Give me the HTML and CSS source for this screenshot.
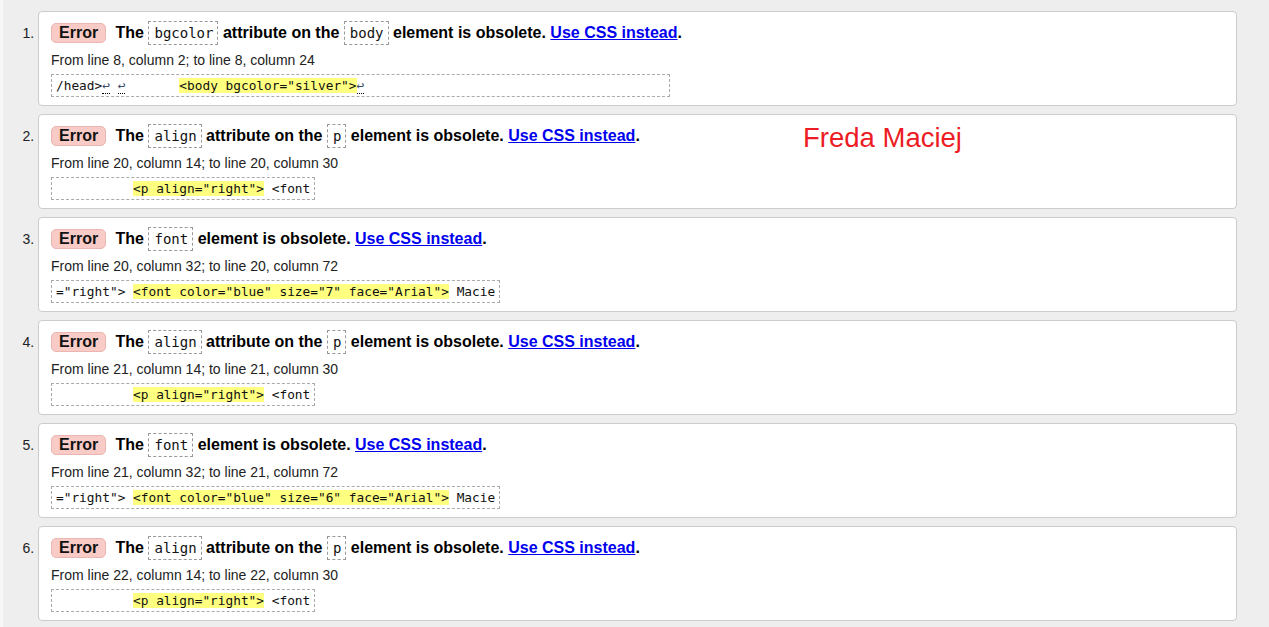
FILE: index.html
```html
<!DOCTYPE html>
<html lang="en">
<head>
<meta charset="utf-8">
<title>Validation results</title>
<link rel="stylesheet" href="styles.css">
</head>
<body>
<ol class="messages">
  <li class="msg">
    <p class="head"><strong class="badge">Error</strong> The <code class="tok">bgcolor</code> attribute on the <code class="tok">body</code> element is obsolete. <a class="link" href="#">Use CSS instead</a>.</p>
    <p class="loc">From line 8, column 2; to line 8, column 24</p>
    <p class="extract"><code>/head&gt;<span class="lf">↩</span> <span class="lf">↩</span>       <b class="hl">&lt;body bgcolor="silver"&gt;</b><span class="lf">↩</span>                                       </code></p>
  </li>
  <li class="msg">
    <p class="head"><strong class="badge">Error</strong> The <code class="tok">align</code> attribute on the <code class="tok">p</code> element is obsolete. <a class="link" href="#">Use CSS instead</a>.</p>
    <p class="loc">From line 20, column 14; to line 20, column 30</p>
    <p class="extract"><code>          <b class="hl">&lt;p align="right"&gt;</b> &lt;font</code></p>
  </li>
  <li class="msg">
    <p class="head"><strong class="badge">Error</strong> The <code class="tok">font</code> element is obsolete. <a class="link" href="#">Use CSS instead</a>.</p>
    <p class="loc">From line 20, column 32; to line 20, column 72</p>
    <p class="extract"><code>="right"&gt; <b class="hl">&lt;font color="blue" size="7" face="Arial"&gt;</b> Macie</code></p>
  </li>
  <li class="msg">
    <p class="head"><strong class="badge">Error</strong> The <code class="tok">align</code> attribute on the <code class="tok">p</code> element is obsolete. <a class="link" href="#">Use CSS instead</a>.</p>
    <p class="loc">From line 21, column 14; to line 21, column 30</p>
    <p class="extract"><code>          <b class="hl">&lt;p align="right"&gt;</b> &lt;font</code></p>
  </li>
  <li class="msg">
    <p class="head"><strong class="badge">Error</strong> The <code class="tok">font</code> element is obsolete. <a class="link" href="#">Use CSS instead</a>.</p>
    <p class="loc">From line 21, column 32; to line 21, column 72</p>
    <p class="extract"><code>="right"&gt; <b class="hl">&lt;font color="blue" size="6" face="Arial"&gt;</b> Macie</code></p>
  </li>
  <li class="msg">
    <p class="head"><strong class="badge">Error</strong> The <code class="tok">align</code> attribute on the <code class="tok">p</code> element is obsolete. <a class="link" href="#">Use CSS instead</a>.</p>
    <p class="loc">From line 22, column 14; to line 22, column 30</p>
    <p class="extract"><code>          <b class="hl">&lt;p align="right"&gt;</b> &lt;font</code></p>
  </li>
</ol>
<div class="overlay-name">Freda Maciej</div>
</body>
</html>
```

FILE: styles.css
```css
html, body {
  margin: 0;
  padding: 0;
}
body {
  position: relative;
  width: 1269px;
  height: 627px;
  overflow: hidden;
  background: linear-gradient(to right, #f7f7f7 3px, #eeeeee 3px);
  font-family: "Liberation Sans", Arial, sans-serif;
  color: #000;
}
.messages {
  margin: 0;
  padding: 11px 32px 0 38px;
  display: flex;
  flex-direction: column;
  gap: 8px;
}
.msg {
  background: #fff;
  border: 1px solid #cccccc;
  border-radius: 4px;
  padding: 8px 12px 8px 12px;
}
.msg::marker {
  font-family: "Liberation Sans", Arial, sans-serif;
  font-size: 14px;
  color: #222;
}
.head {
  margin: 0;
  height: 26px;
  line-height: 26px;
  font-size: 16px;
  font-weight: bold;
  white-space: nowrap;
}
.badge {
  display: inline-block;
  line-height: 18px;
  padding: 0 7px;
  margin-right: 5px;
  background: #f8cbc7;
  border: 1px solid #ebb6b1;
  border-radius: 5px;
  color: #111;
}
.tok {
  display: inline-block;
  font-family: "DejaVu Sans Mono", monospace;
  font-weight: normal;
  font-size: 14px;
  line-height: 22px;
  padding: 0 4px 0 5px;
  border: 1px dashed #999;
  color: #111;
}
.link {
  color: #0000ee;
  text-decoration: underline;
}
.loc {
  margin: 4px 0 0 0;
  font-size: 14px;
  line-height: 20px;
  color: #222;
}
.extract {
  margin: 4px 0 0 0;
  line-height: 0;
}
.extract code {
  display: inline-block;
  font-family: "DejaVu Sans Mono", monospace;
  font-size: 12.8px;
  line-height: 21px;
  padding: 0 4px;
  border: 1px dashed #aaa;
  white-space: pre;
  color: #111;
}
.hl {
  font-weight: normal;
  background: #ffff80;
}
.lf {
  color: #3a4a6a;
  border-bottom: 1px dotted #000;
}
.overlay-name {
  position: absolute;
  left: 803px;
  top: 124px;
  font-size: 27.5px;
  line-height: 27px;
  color: #ed1c24;
}
```
